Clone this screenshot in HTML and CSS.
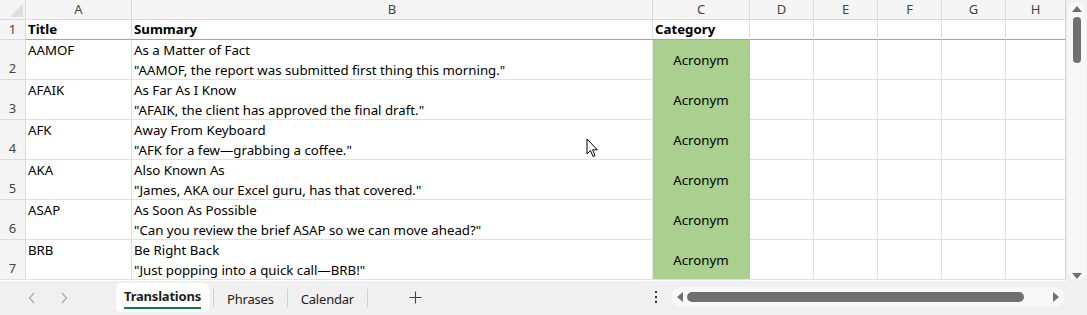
FILE: index.html
```html
<!DOCTYPE html>
<html>

<head>
    <title>Translations</title>
    <link rel="stylesheet" href="styles.css">
</head>

<body>
    <div class="book">
        <div class="sheet-area">
            <div class="grid">
                <div class="corner"><span class="corner-tri"></span></div>
                <div class="colhead">A</div>
                <div class="colhead">B</div>
                <div class="colhead">C</div>
                <div class="colhead">D</div>
                <div class="colhead">E</div>
                <div class="colhead">F</div>
                <div class="colhead">G</div>
                <div class="colhead last">H</div>

                <div class="rowhead frozen">1</div>
                <div class="cell frozen bold">Title</div>
                <div class="cell frozen bold">Summary</div>
                <div class="cell frozen bold">Category</div>
                <div class="cell frozen"></div>
                <div class="cell frozen"></div>
                <div class="cell frozen"></div>
                <div class="cell frozen"></div>
                <div class="cell frozen last"></div>

                <div class="rowhead tall">2</div>
                <div class="cell">AAMOF</div>
                <div class="cell">As a Matter of Fact<br>"AAMOF, the report was submitted first thing this morning."</div>
                <div class="cell cat">Acronym</div>
                <div class="cell"></div><div class="cell"></div><div class="cell"></div><div class="cell"></div><div class="cell last"></div>

                <div class="rowhead tall">3</div>
                <div class="cell">AFAIK</div>
                <div class="cell">As Far As I Know<br>"AFAIK, the client has approved the final draft."</div>
                <div class="cell cat">Acronym</div>
                <div class="cell"></div><div class="cell"></div><div class="cell"></div><div class="cell"></div><div class="cell last"></div>

                <div class="rowhead tall">4</div>
                <div class="cell">AFK</div>
                <div class="cell">Away From Keyboard<br>"AFK for a few—grabbing a coffee."</div>
                <div class="cell cat">Acronym</div>
                <div class="cell"></div><div class="cell"></div><div class="cell"></div><div class="cell"></div><div class="cell last"></div>

                <div class="rowhead tall">5</div>
                <div class="cell">AKA</div>
                <div class="cell">Also Known As<br>"James, AKA our Excel guru, has that covered."</div>
                <div class="cell cat">Acronym</div>
                <div class="cell"></div><div class="cell"></div><div class="cell"></div><div class="cell"></div><div class="cell last"></div>

                <div class="rowhead tall">6</div>
                <div class="cell">ASAP</div>
                <div class="cell">As Soon As Possible<br>"Can you review the brief ASAP so we can move ahead?"</div>
                <div class="cell cat">Acronym</div>
                <div class="cell"></div><div class="cell"></div><div class="cell"></div><div class="cell"></div><div class="cell last"></div>

                <div class="rowhead tall">7</div>
                <div class="cell">BRB</div>
                <div class="cell">Be Right Back<br>"Just popping into a quick call—BRB!"</div>
                <div class="cell cat">Acronym</div>
                <div class="cell"></div><div class="cell"></div><div class="cell"></div><div class="cell"></div><div class="cell last"></div>
            </div>

            <div class="vscroll">
                <div class="vtrack">
                    <span class="tri up"></span>
                    <span class="vthumb"></span>
                    <span class="tri down"></span>
                </div>
            </div>

            <svg class="cursor" width="13" height="21" viewBox="0 0 13 21">
                <path d="M1 1 L1 16 L4.5 12.5 L7 18.5 L9 17.6 L6.6 11.8 L11.3 11.8 Z" fill="#fff" stroke="#000" stroke-width="1" stroke-linejoin="round" />
            </svg>
        </div>

        <div class="sheetbar">
            <div class="nav">
                <svg width="8" height="12" viewBox="0 0 8 12">
                    <path d="M6 1 L1.5 6 L6 11" fill="none" stroke="#a8a8a8" stroke-width="1.2" />
                </svg>
                <svg width="8" height="12" viewBox="0 0 8 12">
                    <path d="M2 1 L6.5 6 L2 11" fill="none" stroke="#a8a8a8" stroke-width="1.2" />
                </svg>
            </div>
            <div class="tab active"><span>Translations</span></div>
            <span class="sep first"></span>
            <div class="tab">Phrases</div>
            <span class="sep"></span>
            <div class="tab">Calendar</div>
            <span class="sep"></span>
            <svg class="add" width="13" height="13" viewBox="0 0 13 13">
                <path d="M6.5 0.5 V12.5 M0.5 6.5 H12.5" stroke="#444" stroke-width="1.1" />
            </svg>
            <div class="spacer"></div>
            <svg class="more" width="4" height="14" viewBox="0 0 4 14">
                <rect x="1" y="1" width="2" height="2" fill="#333" />
                <rect x="1" y="6" width="2" height="2" fill="#333" />
                <rect x="1" y="11" width="2" height="2" fill="#333" />
            </svg>
            <div class="hscroll">
                <span class="tri left"></span>
                <span class="hthumb"></span>
                <span class="tri right"></span>
            </div>
            <div class="corner-gap"></div>
        </div>
    </div>
</body>

</html>
```

FILE: styles.css
```css
/* General */
* {
    box-sizing: border-box;
}

html,
body {
    margin: 0;
    padding: 0;
    background: #fff;
}

body {
    font-family: "Noto Sans", "Open Sans", Arial, sans-serif;
    color: #000;
    width: 1087px;
    height: 315px;
    overflow: hidden;
}

.book {
    display: flex;
    flex-direction: column;
    height: 315px;
}

/* Sheet grid */
.sheet-area {
    position: relative;
    display: flex;
    height: 281px;
}

.grid {
    display: grid;
    grid-template-columns: 26px 106px 521px 97px 64px 64px 64px 64px 60px;
    grid-template-rows: 20px 20px repeat(6, 40px);
    width: 1066px;
    height: 280px;
    overflow: hidden;
    border-bottom: 1px solid #e1e1e1;
}

.corner {
    position: relative;
    background: #f5f5f5;
    border-right: 1px solid #dadada;
    border-bottom: 1px solid #dadada;
}

.corner-tri {
    position: absolute;
    right: 2px;
    bottom: 2px;
    width: 0;
    height: 0;
    border-left: 13px solid transparent;
    border-bottom: 13px solid #dedede;
}

.colhead {
    background: #f5f5f5;
    border-right: 1px solid #dadada;
    border-bottom: 1px solid #dadada;
    color: #444;
    font-size: 13px;
    line-height: 19px;
    text-align: center;
}

.rowhead {
    background: #f5f5f5;
    border-right: 1px solid #dadada;
    border-bottom: 1px solid #dadada;
    color: #444;
    font-size: 13px;
    line-height: 19px;
    text-align: center;
}

.rowhead.tall {
    display: flex;
    align-items: flex-end;
    justify-content: center;
    padding-bottom: 1px;
}

.cell {
    border-right: 1px solid #e1e1e1;
    border-bottom: 1px solid #e1e1e1;
    font-size: 13.25px;
    line-height: 20px;
    padding-left: 2px;
    white-space: nowrap;
    overflow: visible;
}

.cell.frozen,
.rowhead.frozen {
    border-bottom-color: #a3a3a3;
    line-height: 19px;
}

.rowhead.frozen {
    border-bottom-color: #dadada;
}

.cell.bold {
    font-weight: bold;
}

.cell.last,
.colhead.last {
    border-right-color: #d4d4d4;
}

.cell.cat {
    background: #a9d08e;
    border-color: #a9d08e;
    display: flex;
    align-items: center;
    justify-content: center;
    padding-left: 0;
}

/* Vertical scrollbar */
.vscroll {
    width: 21px;
    background: #f0f0f0;
    padding: 2px 1px 0 2px;
}

.vtrack {
    position: relative;
    height: 278px;
    background: #f8f8f8;
    border-radius: 9px;
}

.vthumb {
    position: absolute;
    left: 5px;
    top: 15px;
    width: 8px;
    height: 46px;
    border-radius: 4px;
    background: #707070;
}

.tri {
    position: absolute;
    width: 0;
    height: 0;
}

.tri.up {
    left: 4px;
    top: 4px;
    border-left: 5px solid transparent;
    border-right: 5px solid transparent;
    border-bottom: 6px solid #707070;
}

.tri.down {
    left: 4px;
    top: 271px;
    border-left: 5px solid transparent;
    border-right: 5px solid transparent;
    border-top: 6px solid #707070;
}

.cursor {
    position: absolute;
    left: 586px;
    top: 138px;
}

/* Sheet tabs bar */
.sheetbar {
    flex: 1;
    display: flex;
    align-items: center;
    background: #f0f0f0;
    font-size: 13px;
    color: #222;
    position: relative;
}

.nav {
    display: flex;
    align-items: center;
    width: 116px;
    padding-left: 28px;
    gap: 24px;
    padding-bottom: 1px;
}

.tab {
    height: 29px;
    display: flex;
    align-items: center;
    padding: 2px 13px 0 13px;
    letter-spacing: -0.2px;
}

.tab.active {
    background: #fff;
    border-radius: 5px;
    padding: 0 8px;
    font-weight: bold;
    color: #1e1e1e;
    align-self: flex-start;
    margin-top: 2px;
}

.tab.active span {
    border-bottom: 2px solid #107c41;
    line-height: 20px;
    padding-bottom: 1px;
}

.sep {
    width: 1px;
    height: 18px;
    background: #d0d0d0;
}

.sep.first {
    margin-left: 4px;
}

.add {
    margin-left: 41px;
    margin-bottom: 1px;
}

.spacer {
    flex: 1;
}

.more {
    margin-right: 13px;
    margin-bottom: 2px;
}

.hscroll {
    position: relative;
    width: 394px;
    height: 20px;
    margin-bottom: 2px;
    background: #f8f8f8;
    border-radius: 10px;
}

.tri.left {
    left: 6px;
    top: 5px;
    border-top: 5px solid transparent;
    border-bottom: 5px solid transparent;
    border-right: 6px solid #707070;
}

.tri.right {
    left: 382px;
    top: 5px;
    border-top: 5px solid transparent;
    border-bottom: 5px solid transparent;
    border-left: 6px solid #707070;
}

.hthumb {
    position: absolute;
    left: 16px;
    top: 5px;
    width: 337px;
    height: 10px;
    border-radius: 5px;
    background: #707070;
}

.corner-gap {
    width: 22px;
}
```
